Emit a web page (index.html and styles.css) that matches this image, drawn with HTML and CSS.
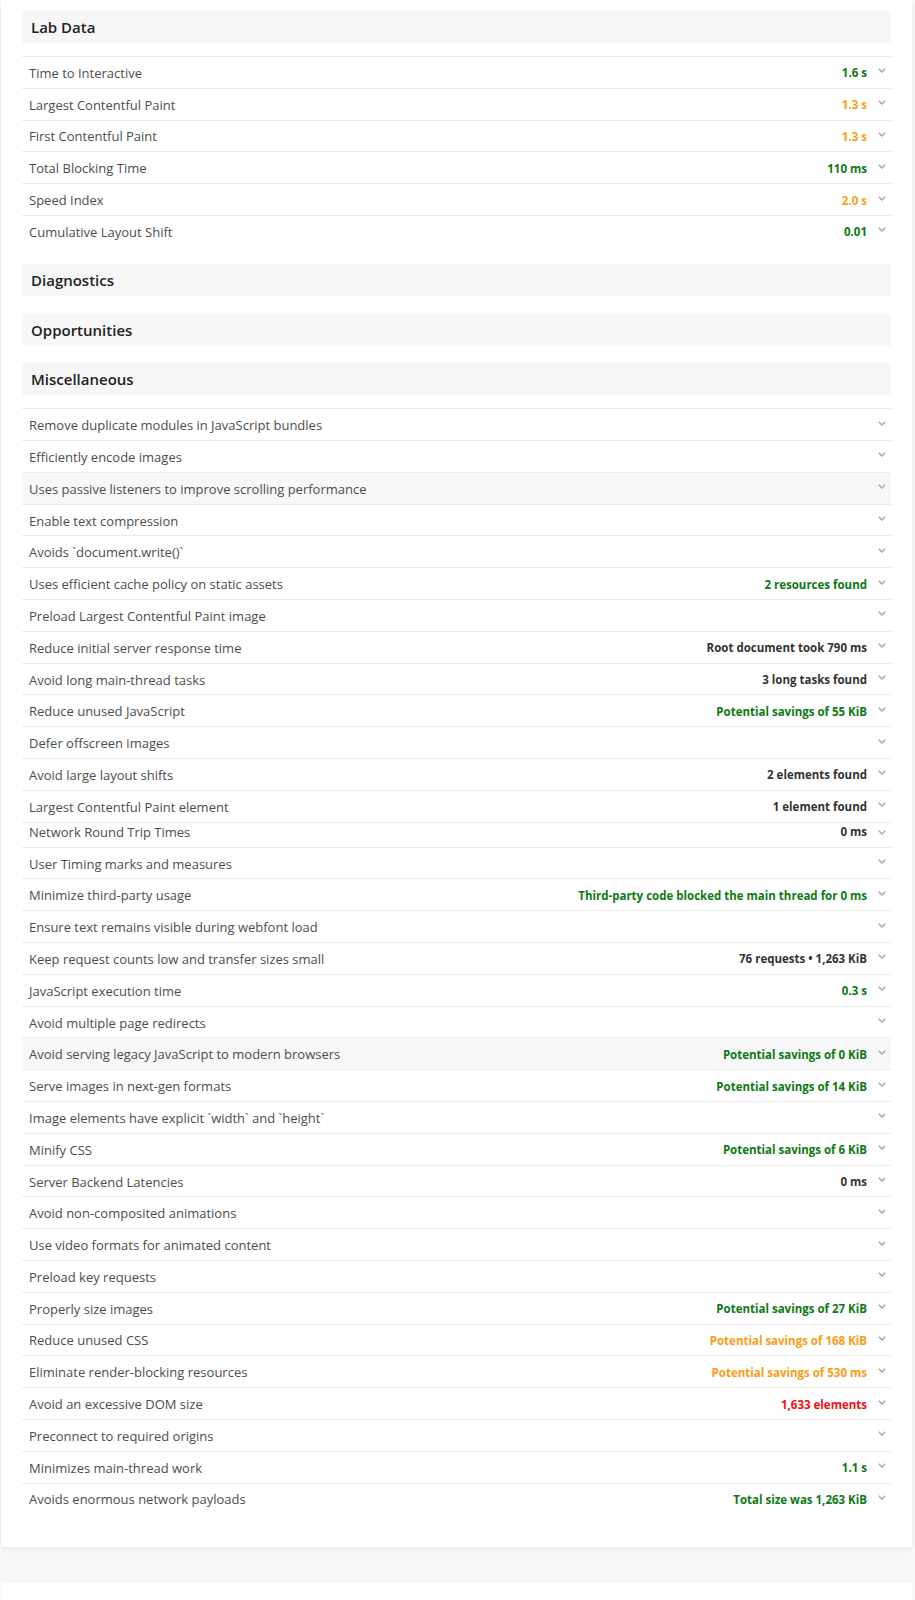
FILE: index.html
```html
<!DOCTYPE html>
<html lang="en">
<head>
    <meta charset="UTF-8">
    <title>Performance Report</title>
    <link rel="stylesheet" href="styles.css">
</head>
<body>

<div class="card">

    <section class="group">
        <h2 class="group-title">Lab Data</h2>
        <ul class="audits">
            <li class="audit"><span class="audit-name">Time to Interactive</span><span class="audit-value good">1.6 s</span><svg class="chevron" viewBox="0 0 8 5"><polyline points="0.8,0.8 4,4 7.2,0.8"/></svg></li>
            <li class="audit"><span class="audit-name">Largest Contentful Paint</span><span class="audit-value avg">1.3 s</span><svg class="chevron" viewBox="0 0 8 5"><polyline points="0.8,0.8 4,4 7.2,0.8"/></svg></li>
            <li class="audit"><span class="audit-name">First Contentful Paint</span><span class="audit-value avg">1.3 s</span><svg class="chevron" viewBox="0 0 8 5"><polyline points="0.8,0.8 4,4 7.2,0.8"/></svg></li>
            <li class="audit"><span class="audit-name">Total Blocking Time</span><span class="audit-value good">110 ms</span><svg class="chevron" viewBox="0 0 8 5"><polyline points="0.8,0.8 4,4 7.2,0.8"/></svg></li>
            <li class="audit"><span class="audit-name">Speed Index</span><span class="audit-value avg">2.0 s</span><svg class="chevron" viewBox="0 0 8 5"><polyline points="0.8,0.8 4,4 7.2,0.8"/></svg></li>
            <li class="audit"><span class="audit-name">Cumulative Layout Shift</span><span class="audit-value good">0.01</span><svg class="chevron" viewBox="0 0 8 5"><polyline points="0.8,0.8 4,4 7.2,0.8"/></svg></li>
        </ul>
    </section>

    <section class="group">
        <h2 class="group-title">Diagnostics</h2>
    </section>

    <section class="group">
        <h2 class="group-title">Opportunities</h2>
    </section>

    <section class="group">
        <h2 class="group-title">Miscellaneous</h2>
        <ul class="audits">
            <li class="audit"><span class="audit-name">Remove duplicate modules in JavaScript bundles</span><svg class="chevron" viewBox="0 0 8 5"><polyline points="0.8,0.8 4,4 7.2,0.8"/></svg></li>
            <li class="audit"><span class="audit-name">Efficiently encode images</span><svg class="chevron" viewBox="0 0 8 5"><polyline points="0.8,0.8 4,4 7.2,0.8"/></svg></li>
            <li class="audit hover"><span class="audit-name">Uses passive listeners to improve scrolling performance</span><svg class="chevron" viewBox="0 0 8 5"><polyline points="0.8,0.8 4,4 7.2,0.8"/></svg></li>
            <li class="audit"><span class="audit-name">Enable text compression</span><svg class="chevron" viewBox="0 0 8 5"><polyline points="0.8,0.8 4,4 7.2,0.8"/></svg></li>
            <li class="audit"><span class="audit-name">Avoids `document.write()`</span><svg class="chevron" viewBox="0 0 8 5"><polyline points="0.8,0.8 4,4 7.2,0.8"/></svg></li>
            <li class="audit"><span class="audit-name">Uses efficient cache policy on static assets</span><span class="audit-value good">2 resources found</span><svg class="chevron" viewBox="0 0 8 5"><polyline points="0.8,0.8 4,4 7.2,0.8"/></svg></li>
            <li class="audit"><span class="audit-name">Preload Largest Contentful Paint image</span><svg class="chevron" viewBox="0 0 8 5"><polyline points="0.8,0.8 4,4 7.2,0.8"/></svg></li>
            <li class="audit"><span class="audit-name">Reduce initial server response time</span><span class="audit-value">Root document took 790 ms</span><svg class="chevron" viewBox="0 0 8 5"><polyline points="0.8,0.8 4,4 7.2,0.8"/></svg></li>
            <li class="audit"><span class="audit-name">Avoid long main-thread tasks</span><span class="audit-value">3 long tasks found</span><svg class="chevron" viewBox="0 0 8 5"><polyline points="0.8,0.8 4,4 7.2,0.8"/></svg></li>
            <li class="audit"><span class="audit-name">Reduce unused JavaScript</span><span class="audit-value good">Potential savings of 55 KiB</span><svg class="chevron" viewBox="0 0 8 5"><polyline points="0.8,0.8 4,4 7.2,0.8"/></svg></li>
            <li class="audit"><span class="audit-name">Defer offscreen images</span><svg class="chevron" viewBox="0 0 8 5"><polyline points="0.8,0.8 4,4 7.2,0.8"/></svg></li>
            <li class="audit"><span class="audit-name">Avoid large layout shifts</span><span class="audit-value">2 elements found</span><svg class="chevron" viewBox="0 0 8 5"><polyline points="0.8,0.8 4,4 7.2,0.8"/></svg></li>
            <li class="audit"><span class="audit-name">Largest Contentful Paint element</span><span class="audit-value">1 element found</span><svg class="chevron" viewBox="0 0 8 5"><polyline points="0.8,0.8 4,4 7.2,0.8"/></svg></li>
            <li class="audit short"><span class="audit-name">Network Round Trip Times</span><span class="audit-value">0 ms</span><svg class="chevron" viewBox="0 0 8 5"><polyline points="0.8,0.8 4,4 7.2,0.8"/></svg></li>
            <li class="audit"><span class="audit-name">User Timing marks and measures</span><svg class="chevron" viewBox="0 0 8 5"><polyline points="0.8,0.8 4,4 7.2,0.8"/></svg></li>
            <li class="audit"><span class="audit-name">Minimize third-party usage</span><span class="audit-value good">Third-party code blocked the main thread for 0 ms</span><svg class="chevron" viewBox="0 0 8 5"><polyline points="0.8,0.8 4,4 7.2,0.8"/></svg></li>
            <li class="audit"><span class="audit-name">Ensure text remains visible during webfont load</span><svg class="chevron" viewBox="0 0 8 5"><polyline points="0.8,0.8 4,4 7.2,0.8"/></svg></li>
            <li class="audit"><span class="audit-name">Keep request counts low and transfer sizes small</span><span class="audit-value">76 requests • 1,263 KiB</span><svg class="chevron" viewBox="0 0 8 5"><polyline points="0.8,0.8 4,4 7.2,0.8"/></svg></li>
            <li class="audit"><span class="audit-name">JavaScript execution time</span><span class="audit-value good">0.3 s</span><svg class="chevron" viewBox="0 0 8 5"><polyline points="0.8,0.8 4,4 7.2,0.8"/></svg></li>
            <li class="audit"><span class="audit-name">Avoid multiple page redirects</span><svg class="chevron" viewBox="0 0 8 5"><polyline points="0.8,0.8 4,4 7.2,0.8"/></svg></li>
            <li class="audit hover"><span class="audit-name">Avoid serving legacy JavaScript to modern browsers</span><span class="audit-value good">Potential savings of 0 KiB</span><svg class="chevron" viewBox="0 0 8 5"><polyline points="0.8,0.8 4,4 7.2,0.8"/></svg></li>
            <li class="audit"><span class="audit-name">Serve images in next-gen formats</span><span class="audit-value good">Potential savings of 14 KiB</span><svg class="chevron" viewBox="0 0 8 5"><polyline points="0.8,0.8 4,4 7.2,0.8"/></svg></li>
            <li class="audit"><span class="audit-name">Image elements have explicit `width` and `height`</span><svg class="chevron" viewBox="0 0 8 5"><polyline points="0.8,0.8 4,4 7.2,0.8"/></svg></li>
            <li class="audit"><span class="audit-name">Minify CSS</span><span class="audit-value good">Potential savings of 6 KiB</span><svg class="chevron" viewBox="0 0 8 5"><polyline points="0.8,0.8 4,4 7.2,0.8"/></svg></li>
            <li class="audit"><span class="audit-name">Server Backend Latencies</span><span class="audit-value">0 ms</span><svg class="chevron" viewBox="0 0 8 5"><polyline points="0.8,0.8 4,4 7.2,0.8"/></svg></li>
            <li class="audit"><span class="audit-name">Avoid non-composited animations</span><svg class="chevron" viewBox="0 0 8 5"><polyline points="0.8,0.8 4,4 7.2,0.8"/></svg></li>
            <li class="audit"><span class="audit-name">Use video formats for animated content</span><svg class="chevron" viewBox="0 0 8 5"><polyline points="0.8,0.8 4,4 7.2,0.8"/></svg></li>
            <li class="audit"><span class="audit-name">Preload key requests</span><svg class="chevron" viewBox="0 0 8 5"><polyline points="0.8,0.8 4,4 7.2,0.8"/></svg></li>
            <li class="audit"><span class="audit-name">Properly size images</span><span class="audit-value good">Potential savings of 27 KiB</span><svg class="chevron" viewBox="0 0 8 5"><polyline points="0.8,0.8 4,4 7.2,0.8"/></svg></li>
            <li class="audit"><span class="audit-name">Reduce unused CSS</span><span class="audit-value avg">Potential savings of 168 KiB</span><svg class="chevron" viewBox="0 0 8 5"><polyline points="0.8,0.8 4,4 7.2,0.8"/></svg></li>
            <li class="audit"><span class="audit-name">Eliminate render-blocking resources</span><span class="audit-value avg">Potential savings of 530 ms</span><svg class="chevron" viewBox="0 0 8 5"><polyline points="0.8,0.8 4,4 7.2,0.8"/></svg></li>
            <li class="audit"><span class="audit-name">Avoid an excessive DOM size</span><span class="audit-value bad">1,633 elements</span><svg class="chevron" viewBox="0 0 8 5"><polyline points="0.8,0.8 4,4 7.2,0.8"/></svg></li>
            <li class="audit"><span class="audit-name">Preconnect to required origins</span><svg class="chevron" viewBox="0 0 8 5"><polyline points="0.8,0.8 4,4 7.2,0.8"/></svg></li>
            <li class="audit"><span class="audit-name">Minimizes main-thread work</span><span class="audit-value good">1.1 s</span><svg class="chevron" viewBox="0 0 8 5"><polyline points="0.8,0.8 4,4 7.2,0.8"/></svg></li>
            <li class="audit"><span class="audit-name">Avoids enormous network payloads</span><span class="audit-value good">Total size was 1,263 KiB</span><svg class="chevron" viewBox="0 0 8 5"><polyline points="0.8,0.8 4,4 7.2,0.8"/></svg></li>
        </ul>
    </section>

</div>

<div class="card card-next"></div>

</body>
</html>
```

FILE: styles.css
```css
body {
    margin: 0;
    background: #f8f8f8;
    font-family: 'Open Sans', 'Noto Sans', sans-serif;
    color: #4d4d4d;
}
.card {
    background: #fff;
    margin: 0 3px 0 1px;
    padding: 11px 21px 15.5px 21px;
    box-shadow: 0 2px 6px rgba(0,0,0,0.07);
}
.card-next {
    margin-top: 36px;
    height: 80px;
    padding: 0;
    box-shadow: none;
}
.group {
    margin-bottom: 17.5px;
}
.group-title {
    margin: 0;
    height: 32px;
    line-height: 32px;
    padding-left: 9px;
    background: #f7f7f7;
    font-size: 15px;
    font-weight: 600;
    color: #222;
}
.audits {
    list-style: none;
    margin: 13px 0 0 0;
    padding: 0;
}
.audit {
    display: flex;
    align-items: center;
    box-sizing: border-box;
    height: 31.8px;
    border-top: 1px solid #ececec;
    padding: 1px 5px 0 7px;
    font-size: 13px;
}
.audit.hover {
    background: #f8f8f8;
}
.audit.short {
    height: 25px;
    align-items: flex-start;
    padding-top: 0;
}
.audit-name {
    flex: 1;
}
.audit-value {
    font-size: 11.5px;
    font-weight: 700;
    color: #333;
}
.audit.short .audit-value {
    margin-top: 1px;
}
.audit-value.good { color: #0b7a12; }
.audit-value.avg { color: #fa9c15; }
.audit-value.bad { color: #f20f0f; }
.chevron {
    width: 8px;
    height: 5px;
    margin: 0 0 4px 11px;
    fill: none;
    stroke: #aaa;
    stroke-width: 1.5;
}
.audit.short .chevron {
    margin-top: 7px;
}
```
